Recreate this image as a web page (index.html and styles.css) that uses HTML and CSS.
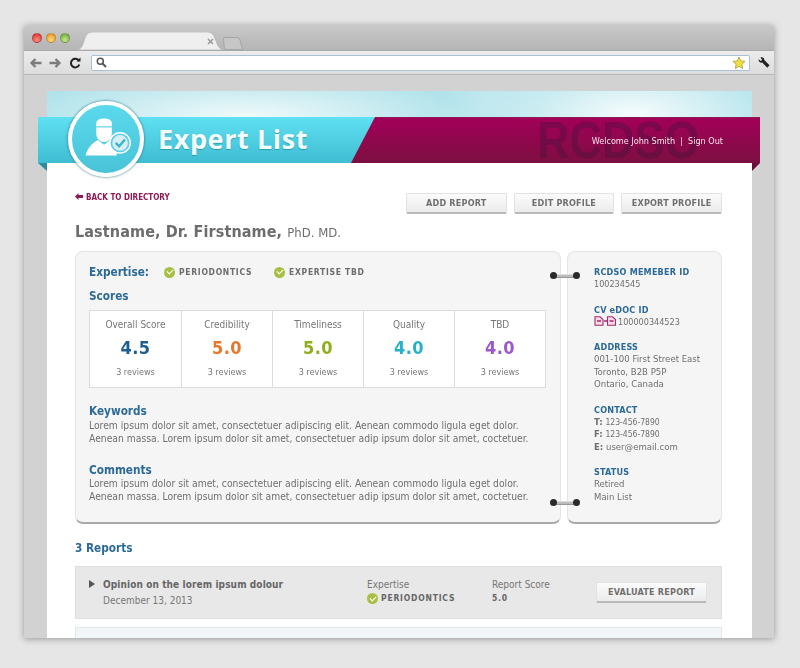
FILE: index.html
```html
<!DOCTYPE html>
<html lang="en">
<head>
<meta charset="utf-8">
<title>Expert List</title>
<link rel="stylesheet" href="styles.css">
</head>
<body>
<div class="window">
  <div class="tabbar">
    <div class="lights"><i class="light red"></i><i class="light amber"></i><i class="light green"></i></div>
    <svg class="tab" width="150" height="18" viewBox="0 0 150 18"><path d="M0 18C6 18 7 15 9 9 11 3 12 0 18 0H132C137 0 139 3 141 9 143 15 145 18 150 18Z" fill="#efefef" stroke="#b4b4b4" stroke-width=".7"/><path d="M133 7l5 5M138 7l-5 5" stroke="#9b9b9b" stroke-width="1.6"/></svg>
    <svg class="newtab" width="20" height="13" viewBox="0 0 20 13"><path d="M.5 1.500Q.5.5 2 .5H14Q16 .5 17 3L19.500 12.500H3Q1.500 12.500 1.200 10Z" fill="#c6c6c6" stroke="#a5a5a5"/></svg>
  </div>
  <div class="toolbar">
    <svg class="navicon" width="14" height="12" viewBox="0 0 14 12"><path d="M12.500 6H3M6.500 2 2.500 6l4 4" fill="none" stroke="#7b7b7b" stroke-width="2.300"/></svg>
    <svg class="navicon" width="14" height="12" viewBox="0 0 14 12"><path d="M1.500 6H11M7.500 2l4 4-4 4" fill="none" stroke="#7b7b7b" stroke-width="2.300"/></svg>
    <svg class="navicon reload" width="12" height="12" viewBox="0 0 12 12"><path d="M10 4A4.300 4.300 0 1 0 10.300 7.500" fill="none" stroke="#222" stroke-width="2"/><path d="M7.500 4.500H11.500V.5Z" fill="#222"/></svg>
    <div class="urlbar">
      <svg width="11" height="11" viewBox="0 0 11 11"><circle cx="4.300" cy="4.300" r="3" fill="none" stroke="#555" stroke-width="1.500"/><path d="M6.500 6.500 10 10" stroke="#555" stroke-width="2"/></svg>
      <svg width="14" height="14" viewBox="0 0 14 14"><path d="M7 1l1.800 3.900 4.200.5-3.100 2.900.8 4.200L7 10.400 3.300 12.500l.8-4.200L1 5.400l4.200-.5Z" fill="#f2e13c" stroke="#a59a48" stroke-width=".8"/></svg>
    </div>
    <svg class="wrench" width="12" height="12" viewBox="0 0 12 12"><path d="M.6 2.200 2.800 4 4.200 2.700 2.400.7C4.300-.3 6.300 1 6.300 3L11.500 8.300 9.300 10.800 4.200 5.600C2.200 6.200.2 4.400.6 2.200Z" fill="#222"/></svg>
  </div>
  <div class="viewport">
    <div class="page">
      <div class="sky"></div>
      <header class="ribbon">
        <div class="ribbon-blue"><h1 class="brand">Expert List</h1></div>
        <div class="ribbon-red">
          <span class="watermark">RCDSO</span>
          <span class="welcome">Welcome John Smith &nbsp;|&nbsp; Sign Out</span>
        </div>
        <i class="fold fold-left"></i>
        <i class="fold fold-right"></i>
        <div class="avatar">
          <svg width="70" height="70" viewBox="0 0 70 70">
            <path d="M25 19Q25 14 33 14 41 14 41 19V29C41 35 37 38 33 38 29 38 25 35 25 29Z" fill="#fff"/>
            <path d="M25 22.500H41" stroke="#58cfe3" stroke-width="1.200"/>
            <path d="M26.500 36 33 41 39.500 36 46 40V52H14C15.500 45 20 40 26.500 36Z" fill="#fff"/>
            <circle cx="49.500" cy="39" r="10.500" fill="#58cfe3" stroke="#fff" stroke-width="1.500"/>
            <circle cx="49.500" cy="39" r="8" fill="#d8eef2"/>
            <path d="M45 39 48.500 42.500 54.500 35.500" fill="none" stroke="#39b6cc" stroke-width="2.500"/>
          </svg>
        </div>
      </header>
      <main class="content">
        <div class="topline">
          <a class="back"><svg class="back-arrow" width="8" height="7" viewBox="0 0 8 7"><path d="M0 3.500 3.500 0V2H8V5H3.500V7Z" fill="#8c1a55"/></svg>BACK TO DIRECTORY</a>
          <div class="actions">
            <button class="btn">ADD REPORT</button>
            <button class="btn">EDIT PROFILE</button>
            <button class="btn">EXPORT PROFILE</button>
          </div>
        </div>
        <h2 class="name">Lastname, Dr. Firstname, <small>PhD. MD.</small></h2>
        <div class="panels">
          <section class="panel main-panel">
            <div class="expertise">
              <h3 class="section-title">Expertise:</h3>
              <span class="tag"><i class="check"></i>PERIODONTICS</span>
              <span class="tag"><i class="check"></i>EXPERTISE TBD</span>
            </div>
            <h3 class="section-title scores-title">Scores</h3>
            <div class="scores">
              <div class="score"><div class="score-label">Overall Score</div><div class="score-value navy">4.5</div><div class="score-reviews">3 reviews</div></div>
              <div class="score"><div class="score-label">Credibility</div><div class="score-value orange">5.0</div><div class="score-reviews">3 reviews</div></div>
              <div class="score"><div class="score-label">Timeliness</div><div class="score-value lime">5.0</div><div class="score-reviews">3 reviews</div></div>
              <div class="score"><div class="score-label">Quality</div><div class="score-value teal">4.0</div><div class="score-reviews">3 reviews</div></div>
              <div class="score"><div class="score-label">TBD</div><div class="score-value purple">4.0</div><div class="score-reviews">3 reviews</div></div>
            </div>
            <h3 class="section-title keywords-title">Keywords</h3>
            <p class="copy">Lorem ipsum dolor sit amet, consectetuer adipiscing elit. Aenean commodo ligula eget dolor.<br>Aenean massa. Lorem ipsum dolor sit amet, consectetuer adip ipsum dolor sit amet, coctetuer.</p>
            <h3 class="section-title comments-title">Comments</h3>
            <p class="copy">Lorem ipsum dolor sit amet, consectetuer adipiscing elit. Aenean commodo ligula eget dolor.<br>Aenean massa. Lorem ipsum dolor sit amet, consectetuer adip ipsum dolor sit amet, coctetuer.</p>
          </section>
          <aside class="panel side-panel">
            <h4 class="side-title">RCDSO MEMEBER ID</h4>
            <p class="side-text"><span class="num">100234545</span></p>
            <h4 class="side-title">CV eDOC ID</h4>
            <p class="side-text"><svg class="doc" width="23" height="10" viewBox="0 0 23 10"><path d="M1 .8H6L9 3.500V9.200H1ZM13.500 .8H18.500L21.500 3.500V9.200H13.500Z" fill="#f3dbe7" stroke="#a52a6e" stroke-width="1.100"/><path d="M3 5H7M10 5H13M15.500 5H19.500" stroke="#a52a6e" stroke-width="1.300"/></svg><span class="num">100000344523</span></p>
            <h4 class="side-title">ADDRESS</h4>
            <p class="side-text">001-100 First Street East<br>Toronto, B2B P5P<br>Ontario, Canada</p>
            <h4 class="side-title">CONTACT</h4>
            <p class="side-text"><b>T:</b> <span class="num tight">123-456-7890</span><br><b>F:</b> <span class="num tight">123-456-7890</span><br><b>E:</b> user@email.com</p>
            <h4 class="side-title">STATUS</h4>
            <p class="side-text">Retired<br>Main List</p>
          </aside>
          <i class="ring ring-top"></i>
          <i class="ring ring-bottom"></i>
        </div>
        <h3 class="section-title reports-title">3 Reports</h3>
        <div class="report">
          <i class="caret"></i>
          <div class="report-main">
            <div class="report-name">Opinion on the lorem ipsum dolour</div>
            <div class="report-date">December 13, 2013</div>
          </div>
          <div class="report-col report-exp">
            <div class="report-label">Expertise</div>
            <div class="report-strong"><i class="check"></i>PERIODONTICS</div>
          </div>
          <div class="report-col report-score">
            <div class="report-label">Report Score</div>
            <div class="report-strong">5.0</div>
          </div>
          <button class="btn report-btn">EVALUATE REPORT</button>
        </div>
        <div class="report report-next"></div>
      </main>
    </div>
  </div>
</div>
</body>
</html>
```
FILE: styles.css
```css
* { box-sizing: border-box; }
html, body { margin: 0; height: 100%; }
body {
  width: 800px; height: 668px; overflow: hidden;
  background: #e6e6e6;
  padding: 25px 26px 30px 24px;
  font-family: "DejaVu Sans", sans-serif;
  font-stretch: condensed;
  color: #6d6d6d;
}
.window {
  height: 613px; display: flex; flex-direction: column;
  overflow: hidden; border-radius: 3px 3px 0 0;
  box-shadow: 0 1px 7px rgba(0,0,0,.35);
  filter: blur(.3px);
}
.tabbar {
  height: 25px; flex: none; display: flex; align-items: flex-end;
  background: linear-gradient(#c9c9c9, #b5b5b5);
  padding-left: 8px; position: relative;
}
.lights { display: flex; gap: 4px; align-self: flex-start; margin-top: 8px; }
.light { width: 10px; height: 10px; border-radius: 50%; border: 1px solid rgba(0,0,0,.2); }
.red { background: radial-gradient(circle at 50% 75%, #ff8f80, #d3282a); }
.amber { background: radial-gradient(circle at 50% 75%, #ffdc7d, #e68a1c); }
.green { background: radial-gradient(circle at 50% 75%, #c4e88c, #6aa336); }
.tab { margin-left: 5px; display: block; }
.newtab { margin-left: -2px; display: block; }
.toolbar {
  height: 25px; flex: none; display: flex; align-items: center;
  background: linear-gradient(#ececec, #dcdcdc);
  border-top: 1px solid #aaa; border-bottom: 1px solid #b6b6b6;
  padding: 0 0 0 5px;
}
.navicon { margin-right: 5px; flex: none; }
.reload { margin-left: 2px; }
.urlbar {
  margin-left: 5px; width: 659px; height: 16px; flex: none;
  display: flex; align-items: center; justify-content: space-between;
  background: #fff; border: 1px solid #a9c0d9; border-radius: 2px; padding: 0 3px 0 4px;
}
.wrench { margin-left: 8px; flex: none; }
.viewport { flex: 1; background: #d2d2d2; padding: 16px 22px 0 23px; overflow: hidden; }
.page { background: #fff; height: 100%; position: relative; }
.sky {
  height: 26px;
  background:
    linear-gradient(115deg, transparent 56%, rgba(255,255,255,.2) 62%, transparent 70%),
    radial-gradient(ellipse 220px 45px at 28% 100%, #f0fafb, transparent),
    radial-gradient(ellipse 150px 55px at 83% 90%, #f6fcfd, transparent),
    #b2e3eb;
}
.ribbon { margin: 0 -8px 0 -9px; height: 46px; display: flex; position: relative; }
.ribbon-blue {
  width: 337px; flex: none;
  background: linear-gradient(#60e0f3, #3fbdd2);
  padding-left: 120px;
  clip-path: polygon(0 0, 100% 0, 313px 100%, 0 100%);
  margin-right: -30px; position: relative; z-index: 1;
}
.brand {
  margin: 0; font: bold 27px/44px "Open Sans", sans-serif; letter-spacing: .6px;
  color: #f4fdfe; text-shadow: 0 1px 1px rgba(0,90,110,.4);
}
.ribbon-red {
  flex: 1; position: relative;
  background: linear-gradient(#a20058, #7c0f41);
  border-top: 1px solid #8d1a50;
}
.watermark {
  position: absolute; left: 192px; top: -3px;
  font: bold 45px/52px "Liberation Sans", sans-serif; color: rgba(50,20,60,.3);
  transform: scaleY(1.15); transform-origin: 0 50%;
}
.welcome {
  position: absolute; right: 37px; top: 17px;
  font-size: 9px; line-height: 12px; color: #f6e3ec; white-space: nowrap;
}
.fold { position: absolute; top: 100%; width: 0; height: 0; border-style: solid; }
.fold-left { left: 0; border-width: 0 9px 8px 0; border-color: transparent #2c8c9d transparent transparent; }
.fold-right { right: 0; border-width: 8px 8px 0 0; border-color: #6c0c39 transparent transparent transparent; }
.avatar {
  position: absolute; left: 30px; top: -16px; z-index: 2;
  width: 76px; height: 76px; border-radius: 50%;
  background: linear-gradient(#5bd9ec, #48c3d8);
  border: 4px solid #fff; box-shadow: 0 0 2px 1px rgba(40,110,125,.5);
  display: flex; align-items: center; justify-content: center;
}
.content { padding: 27px 30px 0 28px; }
.topline { display: flex; justify-content: space-between; align-items: flex-start; }
.back { font-size: 8px; font-weight: bold; line-height: 12px; color: #8c1a55; margin-top: 2px; }
.back-arrow { margin-right: 3px; }
.actions { display: flex; gap: 7px; margin-top: 3px; }
.btn {
  height: 21px; padding: 0; width: 100.700px;
  font: bold 9px/19px "DejaVu Sans", sans-serif; font-stretch: condensed; letter-spacing: .2px; color: #6f6f6f;
  background: linear-gradient(#fbfbfb, #ececec);
  border: 1px solid #e2e2e2; border-bottom: 2px solid #b9b9b9; border-radius: 2px;
}
.name { margin: 7px 0 0; font-size: 16px; line-height: 22px; font-weight: bold; color: #6c6c6c; letter-spacing: .12px; }
.name small { font-size: 13px; font-weight: normal; letter-spacing: 0; }
.panels { display: flex; gap: 6px; margin-top: 7px; position: relative; }
.panel {
  background: #f5f5f5; border: 1px solid #e4e4e4; border-bottom: 2px solid #a9a9a9;
  border-radius: 8px; height: 273px;
}
.main-panel { width: 486px; padding: 12px 14px 0 13px; flex: none; }
.side-panel { width: 155px; padding: 14px 0 0 26px; flex: none; }
.section-title { margin: 0; font-size: 11.700px; line-height: 16px; font-weight: bold; color: #2b6a98; }
.expertise { display: flex; align-items: center; }
.tag { display: inline-flex; align-items: center; font-size: 8.500px; font-weight: bold; letter-spacing: .7px; color: #6d6d6d; }
.expertise .tag:nth-child(2) { margin-left: 15px; }
.expertise .tag:nth-child(3) { margin-left: 22px; }
.check {
  width: 11px; height: 11px; border-radius: 50%; background: #a7c044; margin-right: 4px; position: relative; flex: none;
}
.check::after {
  content: ""; position: absolute; left: 3px; top: 2.500px; width: 5px; height: 3px;
  border-left: 1.500px solid #fff; border-bottom: 1.500px solid #fff; transform: rotate(-45deg);
}
.scores-title { margin-top: 8px; }
.scores {
  display: grid; grid-template-columns: repeat(5, 1fr); margin-top: 6px; width: 457px; height: 78px;
  background: #fff; border: 1px solid #dcdcdc;
}
.score { text-align: center; border-left: 1px solid #dcdcdc; padding-top: 7px; }
.score:first-child { border-left: 0; }
.score-label { font-size: 10px; line-height: 13px; color: #777; }
.score-value { font-size: 18px; line-height: 23px; font-weight: bold; margin-top: 5px; letter-spacing: .5px; }
.score-reviews { font-size: 9px; line-height: 12px; color: #777; margin-top: 7px; }
.navy { color: #1f5f8f; } .orange { color: #e8772d; } .lime { color: #8fae1b; } .teal { color: #28b1c6; } .purple { color: #9b59c9; }
.keywords-title { margin-top: 15px; }
.comments-title { margin-top: 17px; margin-bottom: -1px; }
.copy { margin: 0; font-size: 10.250px; line-height: 13px; color: #6f6f6f; white-space: nowrap; }
.side-title { margin: 0; font-size: 9px; line-height: 12px; font-weight: bold; letter-spacing: .2px; color: #2b6a98; }
.side-text { margin: 0 0 13px; font-size: 9.500px; line-height: 12.500px; color: #6f6f6f; white-space: nowrap; }
.side-text b { font-weight: bold; }
.num { font-size: 9px; }
.tight { font-size: 8.500px; }
.doc { vertical-align: -1px; margin-right: 1px; }
.ring {
  position: absolute; left: 476.500px; width: 26px; height: 4px; background: #bcbcbc;
  border-top: 1px solid #ddd; border-bottom: 1px solid #999;
}
.ring::before, .ring::after { content: ""; position: absolute; top: -3px; width: 7px; height: 7px; border-radius: 50%; background: #2a2a2a; }
.ring::before { left: -2px; } .ring::after { right: -2px; }
.ring-top { top: 23px; } .ring-bottom { top: 250px; }
.reports-title { margin-top: 16px; }
.report {
  margin-top: 10px; height: 53px; background: #e8e8e8; border: 1px solid #dedede;
  display: flex; align-items: flex-start; padding: 11px 14px 0 13px; position: relative;
}
.caret { width: 0; height: 0; border: solid transparent; border-width: 4.500px 0 4.500px 6px; border-left-color: #555; margin-top: 2px; flex: none; }
.report-main { margin-left: 8px; width: 264px; flex: none; }
.report-name { font-size: 10px; line-height: 13px; font-weight: bold; color: #666; letter-spacing: .1px; }
.report-date { font-size: 10px; line-height: 13px; margin-top: 3px; color: #777; }
.report-col { flex: none; }
.report-exp { width: 125px; }
.report-score { width: 104px; }
.report-label { font-size: 10px; line-height: 13px; color: #777; }
.report-strong { font-size: 8.500px; line-height: 13px; font-weight: bold; letter-spacing: .8px; color: #666; display: flex; align-items: center; margin-top: 1px; }
.report-strong .check { margin-right: 3px; }
.report-btn { width: 112px; margin-top: 4px; }
.report-next { margin-top: 8px; background: #f1f6f8; border-color: #e4e8ea; }
```
